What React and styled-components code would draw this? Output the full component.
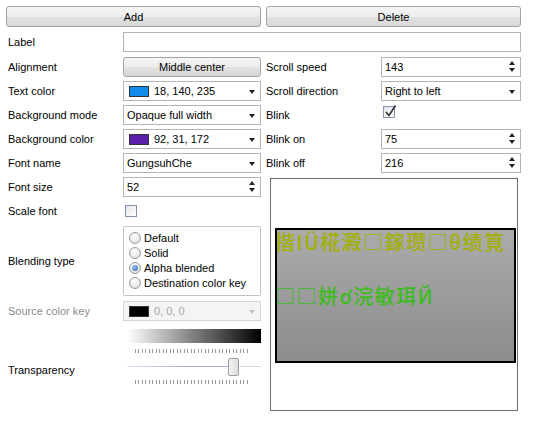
import React from "react";
import styled, { createGlobalStyle } from "styled-components";

const Global = createGlobalStyle`
  body {
    margin: 0;
    background: #ffffff;
    font-family: "Liberation Sans", "DejaVu Sans", sans-serif;
    font-size: 11px;
    color: #000;
  }
`;

const Page = styled.div`
  width: 515px;
  padding: 6px 0 0 6px;
`;

const TopBar = styled.div`
  display: grid;
  grid-template-columns: 255px 255px;
  gap: 5px;
`;

const Button = styled.div`
  height: ${(p) => p.h || 21}px;
  width: ${(p) => (p.w ? `${p.w}px` : "auto")};
  box-sizing: border-box;
  border: 1px solid #a3a3a3;
  border-radius: 3px;
  background: linear-gradient(#f6f6f6 0%, #ececec 50%, #e2e2e2 51%, #d8d8d8 100%);
  display: flex;
  align-items: center;
  justify-content: center;
`;

const Row = styled.div`
  display: flex;
  align-items: center;
  height: ${(p) => p.h || 20}px;
  margin-top: ${(p) => (p.mt === undefined ? 4 : p.mt)}px;
`;

const Label = styled.div`
  width: ${(p) => p.w || 115}px;
  flex: none;
  padding-left: ${(p) => (p.pl === undefined ? 2 : p.pl)}px;
  box-sizing: border-box;
  color: ${(p) => (p.disabled ? "#8c8c8c" : "#000")};
  align-self: ${(p) => (p.top ? "flex-start" : "center")};
  margin-top: ${(p) => p.mtop || 0}px;
`;

const Field = styled.div`
  width: ${(p) => p.w || 138}px;
  height: 20px;
  box-sizing: border-box;
  border: 1px solid ${(p) => (p.disabled ? "#d5d5d5" : "#b4b4b4")};
  background: ${(p) => (p.disabled ? "#f4f4f4" : "#fff")};
  color: ${(p) => (p.disabled ? "#a5a5a5" : "#000")};
  display: flex;
  align-items: center;
  padding-left: 3px;
  position: relative;
`;

const Swatch = styled.span`
  width: 20px;
  height: 11px;
  margin: 0 5px 0 2px;
  background: ${(p) => p.c};
  border: 1px solid #333;
  box-sizing: border-box;
`;

const Arrow = styled.span`
  position: absolute;
  right: 5px;
  top: 8px;
  width: 0;
  height: 0;
  border-left: 3.5px solid transparent;
  border-right: 3.5px solid transparent;
  border-top: 4px solid ${(p) => (p.disabled ? "#c0c0c0" : "#222")};
`;

const Spin = styled.span`
  position: absolute;
  right: 5px;
  top: 3px;
  display: flex;
  flex-direction: column;
  gap: 3px;
`;

const Tri = styled.span`
  width: 0;
  height: 0;
  border-left: 3.5px solid transparent;
  border-right: 3.5px solid transparent;
  ${(p) => (p.up ? "border-bottom: 4px solid #222;" : "border-top: 4px solid #222;")}
`;

const Columns = styled.div`
  display: flex;
  gap: 5px;
`;

const Col = styled.div`
  width: ${(p) => p.w}px;
  display: flex;
  flex-direction: column;
`;

const Check = styled.span`
  width: 12px;
  height: 12px;
  box-sizing: border-box;
  border: 1px solid #8593b0;
  background: linear-gradient(135deg, #e2e5ea, #ffffff);
  margin-left: 2px;
  margin-top: ${(p) => p.mt || 0}px;
  position: relative;
`;

const CheckMark = styled.svg`
  position: absolute;
  left: 0px;
  top: -3px;
`;

const Group = styled.div`
  width: 138px;
  height: 70px;
  box-sizing: border-box;
  border: 1px solid #c4c4c4;
  border-radius: 2px;
  padding: 4px 0 0 5px;
  display: flex;
  flex-direction: column;
  gap: 2px;
`;

const Radio = styled.div`
  display: flex;
  align-items: center;
  gap: 3px;
  height: 13px;
`;

const Dot = styled.span`
  width: 12px;
  height: 12px;
  box-sizing: border-box;
  border-radius: 50%;
  border: 1px solid #9a9a9a;
  background: radial-gradient(circle at 40% 35%, #ffffff, #d8d8d8);
  display: flex;
  align-items: center;
  justify-content: center;
  &::after {
    content: "";
    display: ${(p) => (p.on ? "block" : "none")};
    width: 6px;
    height: 6px;
    border-radius: 50%;
    background: radial-gradient(circle at 35% 35%, #9cc3f0, #2c62b8);
  }
`;

const GradientBar = styled.div`
  width: 134px;
  height: 14px;
  margin: 8px 0 0 4px;
  background: linear-gradient(90deg, #ffffff, #000000);
`;

const Slider = styled.div`
  width: 134px;
  height: 44px;
  margin-left: 4px;
  position: relative;
`;

const Ticks = styled.div`
  position: absolute;
  left: 8px;
  width: 114px;
  top: ${(p) => p.top}px;
  height: 4px;
  background: repeating-linear-gradient(90deg, #9a9a9a 0 1px, transparent 1px 3.5px);
`;

const Track = styled.div`
  position: absolute;
  left: 0;
  right: 0;
  top: 23px;
  height: 1px;
  background: linear-gradient(90deg, #e4dcf2 0%, #b9a6dc 45%, #b9a6dc 75%, #d8d8d8 76%);
`;

const Thumb = styled.div`
  position: absolute;
  left: 101px;
  top: 15px;
  width: 11px;
  height: 18px;
  box-sizing: border-box;
  border: 1px solid #9c9c9c;
  border-radius: 2px;
  background: linear-gradient(90deg, #f4f4f4, #dedede);
`;

const Preview = styled.div`
  width: 248px;
  height: 233px;
  box-sizing: border-box;
  margin: 5px 0 0 4px;
  border: 1px solid #6e6e6e;
  background: #fff;
  padding: 49px 0 0 4px;
`;

const Screen = styled.div`
  width: 241px;
  height: 135px;
  box-sizing: border-box;
  border: 2px solid #000;
  background: linear-gradient(#ababab, #8c8c8c);
  overflow: hidden;
  font-family: "Noto Sans CJK SC", "DejaVu Sans", sans-serif;
  font-size: 20px;
  font-weight: 500;
  letter-spacing: 1.5px;
  white-space: nowrap;
`;

const Line = styled.div`
  color: ${(p) => p.c};
  line-height: 24px;
  margin-top: ${(p) => p.mt}px;
  margin-left: -2px;
`;

const Combo = ({ children, w, swatch, disabled }) => (
  <Field w={w} disabled={disabled}>
    {swatch && <Swatch c={swatch} />}
    {children}
    <Arrow disabled={disabled} />
  </Field>
);

const SpinBox = ({ children, w }) => (
  <Field w={w}>
    {children}
    <Spin>
      <Tri up />
      <Tri />
    </Spin>
  </Field>
);

export default function App() {
  return (
    <Page>
      <Global />
      <TopBar>
        <Button>Add</Button>
        <Button>Delete</Button>
      </TopBar>
      <Row mt={5}>
        <Label w={117}>Label</Label>
        <Field w={398} />
      </Row>
      <Columns>
        <Col w={255}>
          <Row mt={5}>
            <Label w={117}>Alignment</Label>
            <Button h={20} w={138}>
              Middle center
            </Button>
          </Row>
          <Row>
            <Label w={117}>Text color</Label>
            <Combo swatch="#128ceb">18, 140, 235</Combo>
          </Row>
          <Row>
            <Label w={117}>Background mode</Label>
            <Combo>Opaque full width</Combo>
          </Row>
          <Row>
            <Label w={117}>Background color</Label>
            <Combo swatch="#5c1fac">92, 31, 172</Combo>
          </Row>
          <Row>
            <Label w={117}>Font name</Label>
            <Combo>GungsuhChe</Combo>
          </Row>
          <Row>
            <Label w={117}>Font size</Label>
            <SpinBox w={138}>52</SpinBox>
          </Row>
          <Row h={20}>
            <Label w={117}>Scale font</Label>
            <Check />
          </Row>
          <Row h={70} mt={5}>
            <Label w={117}>Blending type</Label>
            <Group>
              <Radio>
                <Dot />
                Default
              </Radio>
              <Radio>
                <Dot />
                Solid
              </Radio>
              <Radio>
                <Dot on />
                Alpha blended
              </Radio>
              <Radio>
                <Dot />
                Destination color key
              </Radio>
            </Group>
          </Row>
          <Row mt={5}>
            <Label w={117} disabled>
              Source color key
            </Label>
            <Combo disabled swatch="#000">
              0, 0, 0
            </Combo>
          </Row>
          <Row h={66} mt={0}>
            <Label w={117} top mtop={43}>
              Transparency
            </Label>
            <div>
              <GradientBar />
              <Slider>
                <Ticks top={6} />
                <Track />
                <Thumb />
                <Ticks top={37} />
              </Slider>
            </div>
          </Row>
        </Col>
        <Col w={255}>
          <Row mt={5}>
            <Label w={115} pl={0}>
              Scroll speed
            </Label>
            <SpinBox w={140}>143</SpinBox>
          </Row>
          <Row>
            <Label w={115} pl={0}>
              Scroll direction
            </Label>
            <Combo w={140}>Right to left</Combo>
          </Row>
          <Row>
            <Label w={115} pl={0}>
              Blink
            </Label>
            <Check mt={-6}>
              <CheckMark width="14" height="14" viewBox="0 0 14 14">
                <path d="M2 8 L5 11.5 L11.5 1.5" stroke="#333" strokeWidth="1.6" fill="none" />
              </CheckMark>
            </Check>
          </Row>
          <Row>
            <Label w={115} pl={0}>
              Blink on
            </Label>
            <SpinBox w={140}>75</SpinBox>
          </Row>
          <Row>
            <Label w={115} pl={0}>
              Blink off
            </Label>
            <SpinBox w={140}>216</SpinBox>
          </Row>
          <Preview>
            <Screen>
              <Line c="#a2b000" mt={0}>
                揩IÜ椛澱□鎵瓒□θ绩筧
              </Line>
              <Line c="#3cbc1c" mt={30}>
                □□姘ơ浣敏珥Й
              </Line>
            </Screen>
          </Preview>
        </Col>
      </Columns>
    </Page>
  );
}
